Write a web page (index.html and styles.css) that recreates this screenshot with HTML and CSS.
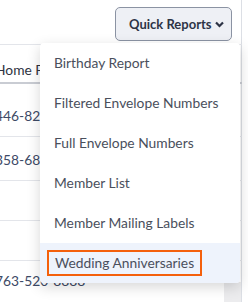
FILE: index.html
```html
<!DOCTYPE html>
<html lang="en">
	<head>
		<meta charset="UTF-8">
		<title>Quick Reports</title>
		<link rel="stylesheet" href="styles.css">
	</head>
	<body>

		<div class="card">
			<div class="toolbar">
				<div class="dropdown">
					<button class="btn-reports">Quick Reports
						<svg class="chevron" width="9" height="7" viewBox="0 0 9 7"><path d="M1 1.5 L4.5 5 L8 1.5" fill="none" stroke="#2d3446" stroke-width="2.2"/></svg>
					</button>
					<ul class="menu">
						<li>Birthday Report</li>
						<li>Filtered Envelope Numbers</li>
						<li>Full Envelope Numbers</li>
						<li>Member List</li>
						<li>Member Mailing Labels</li>
						<li class="active"><span class="focus">Wedding Anniversaries</span></li>
					</ul>
				</div>
			</div>

			<table class="people">
				<thead>
					<tr><th>Home Phone</th></tr>
				</thead>
				<tbody>
					<tr class="r1"><td>446-820-1144</td></tr>
					<tr class="r2"><td>358-680-2231</td></tr>
					<tr class="r3"><td></td></tr>
					<tr class="r4"><td></td></tr>
					<tr class="r5"><td>763-520-8888</td></tr>
				</tbody>
			</table>
			<div class="scroll-end"></div>
		</div>

	</body>
</html>
```

FILE: styles.css
```css
* {
	margin: 0;
	padding: 0;
	box-sizing: border-box;
}

body {
	font-family: Lato, sans-serif;
	font-size: 13.8px;
	color: #3d4455;
	background: #fff;
	overflow: hidden;
}

.card {
	position: relative;
	width: 242px;
	height: 302px;
	border-right: 1px solid #dcdfe5;
}

/* toolbar with the button */
.toolbar {
	display: flex;
	justify-content: flex-end;
	height: 44px;
	padding: 7px 9px 0 0;
}

.dropdown {
	position: relative;
}

.btn-reports {
	display: flex;
	align-items: center;
	gap: 3px;
	height: 34px;
	width: 117px;
	padding: 0 0 0 13px;
	background: #eef0f5;
	border: 1px solid #8b93a3;
	border-radius: 5px;
	font-family: Lato, sans-serif;
	font-size: 13px;
	font-weight: 700;
	color: #2d3446;
	white-space: nowrap;
}

.chevron {
	margin-top: 1px;
}

/* the menu lies over the table */
.menu {
	position: absolute;
	top: 36px;
	right: -8px;
	width: 200px;
	list-style: none;
	background: #fff;
	border-radius: 4px;
	box-shadow: 0 4px 14px rgba(0, 0, 0, 0.16);
	z-index: 2;
}

.menu li {
	height: 40px;
	line-height: 40px;
	padding-left: 14px;
	color: #4a4f5c;
	white-space: nowrap;
}

.menu li.active {
	background: #eef3fc;
	padding-left: 7px;
	border-radius: 0 0 4px 4px;
}

.focus {
	display: inline-block;
	line-height: 22px;
	padding: 0 6px;
	border: 2px solid #f4600c;
}

/* table under the menu */
.people {
	width: 247px;
	margin-left: -5px;
	border-collapse: collapse;
	border-top: 1px solid #e3e5ea;
}

.people th {
	text-align: left;
	font-weight: 400;
	height: 38px;
	padding-top: 13px;
	border-bottom: 2px solid #c9ccd3;
	color: #2e3342;
}

.people td {
	vertical-align: top;
	border-bottom: 1px solid #e3e5ea;
	color: #3d4a66;
}

.r1 td { height: 54px; padding-top: 23px; }
.r2 td { height: 44px; padding-top: 14px; }
.r3 td { height: 40px; }
.r4 td { height: 40px; }
.r5 td { height: 40px; padding-top: 11px; border-bottom: 0; }

.scroll-end {
	position: absolute;
	right: 0;
	bottom: 0;
	width: 17px;
	height: 20px;
	background: #ececee;
}
```
